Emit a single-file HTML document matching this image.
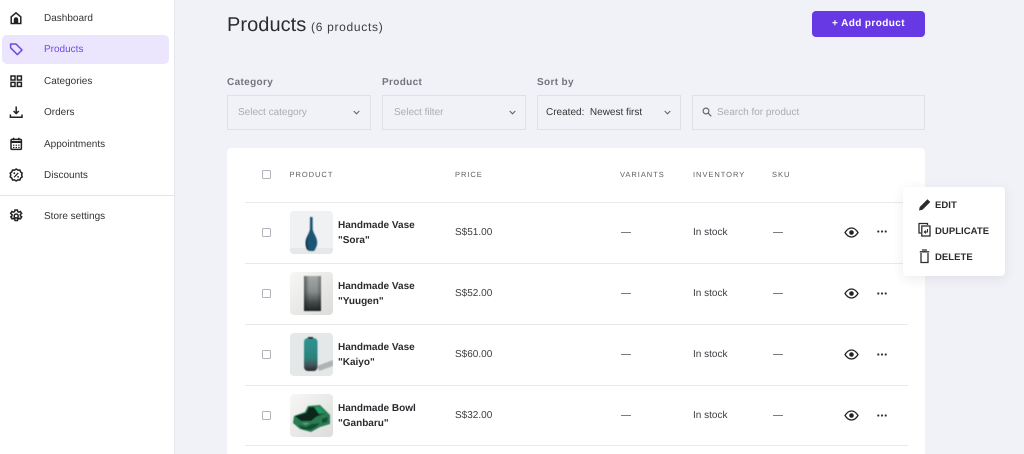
<!DOCTYPE html>
<html><head><meta charset="utf-8"><style>
*{box-sizing:border-box}
html,body{margin:0;padding:0;width:1024px;height:454px;overflow:hidden;background:#f1f2f7;font-family:"Liberation Sans",Arial,sans-serif;text-rendering:geometricPrecision}
#root{position:relative;width:1024px;height:454px;overflow:hidden;background:#f1f2f7}
.a{position:absolute;white-space:nowrap}
#side{position:absolute;left:0;top:0;width:175px;height:454px;background:#fff;border-right:1px solid #e6e7ec}
.nav{position:absolute;left:44px;font-size:10px;line-height:14px;color:#333}
.ni{position:absolute;left:8px;width:16px;height:16px;fill:none;stroke:#222;stroke-width:1.5}
.lab{position:absolute;top:76px;font-size:10px;line-height:13px;font-weight:bold;color:#74747c;letter-spacing:.35px}
.box{position:absolute;top:95px;height:35px;background:#f1f2f7;border:1px solid #e0e1e7;font-size:10px;line-height:33px;color:#ababb1;white-space:nowrap}
.chev{position:absolute;top:110px;width:7px;height:5px;fill:none;stroke:#66666c;stroke-width:1.1}
.th{position:absolute;top:169px;font-size:7.5px;line-height:11px;color:#5c5c64;letter-spacing:.97px}
.line{position:absolute;left:245px;width:663px;height:1px;background:#e9e9ec}
.cb{position:absolute;left:262px;width:9px;height:9px;border:1px solid #b3b3bb;border-radius:1.5px;background:#fff}
.nm{position:absolute;left:338px;font-size:10px;line-height:15px;font-weight:bold;color:#2b2b2f;white-space:nowrap}
.t{position:absolute;font-size:10px;line-height:14px;color:#3c3c42;white-space:nowrap}
.img{position:absolute;left:290px;width:43px;height:43px;border-radius:4px;overflow:hidden}
.eye{position:absolute;left:844px;width:15px;height:11px}
.dots{position:absolute;left:876.5px;width:10px;height:3px}
.mi{position:absolute;left:935px;font-size:9.5px;line-height:13px;font-weight:bold;color:#2c2c30;letter-spacing:.05px}
.ic{position:absolute;left:918px;width:13px;height:15px;fill:none;stroke:#2c2c30;stroke-width:1.3}
</style></head><body><div id="root">
<div id="side"></div>
<div class="a" style="left:0;top:195px;width:174px;height:1px;background:#e4e4e8"></div>
<div class="a" style="left:2px;top:35px;width:167px;height:29px;background:#ebe6fd;border-radius:5px"></div>
<svg class="ni" style="top:10px" viewBox="0 0 16 16"><path d="M3.200 13.500V6.800L8 2.800l4.800 4v6.700z"/><path d="M5.800 14V9.400a2.200 2.200 0 0 1 4.400 0V14z" fill="#222" stroke="none"/></svg>
<svg class="ni" style="top:41px;stroke:#6c45e5" viewBox="0 0 16 16"><path d="M2.600 3h5.400l6 6-4.600 4.600-6.800-6.800z" stroke-linejoin="round"/></svg>
<svg class="ni" style="top:73px" viewBox="0 0 16 16"><rect x="3" y="3" width="4" height="4"/><rect x="9.400" y="3" width="4" height="4"/><rect x="3" y="9.400" width="4" height="4"/><rect x="9.400" y="9.400" width="4" height="4"/></svg>
<svg class="ni" style="top:104px" viewBox="0 0 16 16"><path d="M8.200 2.500v6.700M5.600 7l2.600 2.600L10.800 7"/><path d="M2.400 10.500v2.700h11.600v-2.700"/></svg>
<svg class="ni" style="top:136px" viewBox="0 0 16 16"><rect x="3" y="3.400" width="10.400" height="10" rx="1"/><path d="M3 6h10.400" stroke-width="2"/><path d="M5.600 1.800v2.400M10.800 1.800v2.400"/><path d="M5 9.200h1.400M7.600 9.200H9M10.200 9.200h1.400M5 11.400h1.400M7.600 11.400H9M10.200 11.400h1.400" stroke-width="1.100"/></svg>
<svg class="ni" style="top:167px" viewBox="0 0 16 16"><path d="M8.200 2l1.700 1.100 2-.1.700 1.900 1.600 1.200-.6 1.900.6 1.900-1.600 1.200-.7 1.900-2-.1-1.700 1.100-1.700-1.100-2 .1-.7-1.900L2.200 9.900l.6-1.900-.6-1.900L3.800 4.900l.7-1.900 2 .1z"/><path d="M10.300 5.900l-4.200 4.300" stroke-width="1.200"/><circle cx="6.300" cy="6.200" r=".9" fill="#222" stroke="none"/><circle cx="10.100" cy="9.900" r=".9" fill="#222" stroke="none"/></svg>
<svg class="ni" style="top:208px" viewBox="0 0 16 16"><path d="M7 2h2.400l.3 1.600 1.200.6 1.500-.7 1.200 2-1.300 1 .1 1.300 1.300 1-1.200 2-1.500-.6-1.200.6-.3 1.700H7l-.3-1.700-1.200-.6-1.500.6-1.200-2 1.300-1-.1-1.300-1.300-1 1.200-2 1.500.7 1.200-.6z"/><circle cx="8.200" cy="8" r="2"/></svg>
<div class="nav" style="top:12px">Dashboard</div>
<div class="nav" style="top:43px;color:#7049e8">Products</div>
<div class="nav" style="top:75px">Categories</div>
<div class="nav" style="top:106px">Orders</div>
<div class="nav" style="top:138px">Appointments</div>
<div class="nav" style="top:169px">Discounts</div>
<div class="nav" style="top:210px">Store settings</div>

<div class="a" style="left:227px;top:13px;font-size:20px;line-height:25px;color:#2b2b30;letter-spacing:.05px">Products</div>
<div class="a" style="left:311px;top:20px;font-size:12px;line-height:15px;color:#3c3c42;letter-spacing:.7px">(6 products)</div>
<div class="a" style="left:812px;top:11px;width:113px;height:26px;background:#6639e4;border-radius:4px;color:#fff;font-size:10px;font-weight:bold;line-height:26px;text-align:center;letter-spacing:.4px">+ Add product</div>

<div class="lab" style="left:227px">Category</div>
<div class="lab" style="left:382px">Product</div>
<div class="lab" style="left:537px">Sort by</div>
<div class="box" style="left:227px;width:144px;padding-left:10px">Select category</div>
<div class="box" style="left:382px;width:144px;padding-left:11px">Select filter</div>
<div class="box" style="left:537px;width:144px;padding-left:8px;color:#333">Created:&nbsp; Newest first</div>
<div class="box" style="left:692px;width:233px;padding-left:24px">Search for product</div>
<svg class="chev" style="left:352.500px" viewBox="0 0 7 5"><path d="M.7 1l2.800 2.800L6.300 1"/></svg>
<svg class="chev" style="left:508.500px" viewBox="0 0 7 5"><path d="M.7 1l2.800 2.800L6.300 1"/></svg>
<svg class="chev" style="left:663.500px" viewBox="0 0 7 5"><path d="M.7 1l2.800 2.800L6.300 1"/></svg>
<svg class="a" style="left:702px;top:107px;width:10px;height:10px;fill:none;stroke:#66666c;stroke-width:1.200" viewBox="0 0 10 10"><circle cx="4" cy="4" r="2.900"/><path d="M6.200 6.200L9.300 9.300"/></svg>

<div class="a" style="left:227px;top:148px;width:698px;height:306px;background:#fff;border-radius:4px 4px 0 0"></div>
<div class="cb" style="top:170px"></div>
<div class="th" style="left:289.500px">PRODUCT</div>
<div class="th" style="left:455px">PRICE</div>
<div class="th" style="left:620px">VARIANTS</div>
<div class="th" style="left:693px">INVENTORY</div>
<div class="th" style="left:772px">SKU</div>
<div class="line" style="top:202px"></div>
<div class="line" style="top:263px"></div>
<div class="line" style="top:324px"></div>
<div class="line" style="top:385px"></div>
<div class="line" style="top:445px"></div>

<div class="cb" style="top:228px"></div><div class="cb" style="top:289px"></div><div class="cb" style="top:350px"></div><div class="cb" style="top:411px"></div>

<svg width="0" height="0" style="position:absolute"><defs><filter id="b" x="-20%" y="-20%" width="140%" height="140%"><feGaussianBlur stdDeviation=".45"/></filter><linearGradient id="g1" x1="0" y1="0" x2="0" y2="1"><stop offset="0" stop-color="#a4a9a8"/><stop offset=".45" stop-color="#858c8b"/><stop offset=".75" stop-color="#454c4c"/><stop offset="1" stop-color="#1d2323"/></linearGradient><linearGradient id="g1e" x1="0" y1="0" x2="1" y2="0"><stop offset="0" stop-color="#1a2020" stop-opacity=".55"/><stop offset=".3" stop-color="#1a2020" stop-opacity="0"/><stop offset=".75" stop-color="#1a2020" stop-opacity="0"/><stop offset="1" stop-color="#1a2020" stop-opacity=".35"/></linearGradient><linearGradient id="g2" x1="0" y1="0" x2="0" y2="1"><stop offset="0" stop-color="#2f9490"/><stop offset=".6" stop-color="#2c827c"/><stop offset=".82" stop-color="#44555a"/><stop offset="1" stop-color="#27272d"/></linearGradient><linearGradient id="g3" x1="0" y1="0" x2="1" y2="1"><stop offset="0" stop-color="#f7f7f6"/><stop offset="1" stop-color="#dcdcda"/></linearGradient></defs></svg>

<svg class="img" style="top:211px" viewBox="0 0 43 43"><rect width="43" height="43" fill="#eff1f3"/><rect y="37" width="43" height="6" fill="#e6e8e8"/><g filter="url(#b)"><path d="M20 6h2.600l.1 12c.4 4.500 4.500 8 4.500 13.500 0 3.500-1.700 6-3 8.500h-5.400c-1.500-2.500-3.300-5-3.300-8.500 0-5.500 4-9 4.400-13.500z" fill="#1b5573"/><path d="M19 24c-2 3-2.300 10-.2 15h-1.500c-2.500-4-2.300-10 1.700-15z" fill="#0d3045"/></g></svg>
<svg class="img" style="top:272px" viewBox="0 0 43 43"><rect width="43" height="43" fill="url(#g3)"/><g filter="url(#b)"><rect x="14" y="4" width="17" height="35" fill="url(#g1)"/><rect x="14" y="4" width="17" height="35" fill="url(#g1e)"/></g></svg>
<svg class="img" style="top:333px" viewBox="0 0 43 43"><rect width="43" height="43" fill="#e5e8e8"/><g filter="url(#b)"><path d="M27 33l16-6v6l-14 5z" fill="#b0b2b3"/><rect x="14" y="5" width="13.500" height="33" rx="4" fill="url(#g2)"/><rect x="18" y="4" width="5" height="2" fill="#25322f"/></g></svg>
<svg class="img" style="top:394px" viewBox="0 0 43 43"><rect width="43" height="43" fill="url(#g3)"/><g filter="url(#b)"><path d="M4 22l11-4 3-6 12-1 10 10v9l-10 3-9 5-11-3-7-6z" fill="#2a7c52"/><path d="M5 22l11-3 3-6 10 0 6 6-9 4-5 4H11z" fill="#10261f"/><path d="M24 13l6 0 5 6-6 1z" fill="#1f9a60"/><path d="M8 31l8 2 6-3 8-1-4 4-6 3-8-1zM32 25l6-2-1 5-5 1z" fill="#174d35"/><path d="M12 29l7 0-3 2z" fill="#5aa781"/></g></svg>

<div class="nm" style="top:218px">Handmade Vase<br>"Sora"</div>
<div class="nm" style="top:279px">Handmade Vase<br>"Yuugen"</div>
<div class="nm" style="top:340px">Handmade Vase<br>"Kaiyo"</div>
<div class="nm" style="top:401px">Handmade Bowl<br>"Ganbaru"</div>

<div class="t" style="left:455px;top:226px">S$51.00</div><div class="t" style="left:621px;top:226px">—</div><div class="t" style="left:693px;top:226px">In stock</div><div class="t" style="left:773px;top:226px">—</div>
<div class="t" style="left:455px;top:287px">S$52.00</div><div class="t" style="left:621px;top:287px">—</div><div class="t" style="left:693px;top:287px">In stock</div><div class="t" style="left:773px;top:287px">—</div>
<div class="t" style="left:455px;top:348px">S$60.00</div><div class="t" style="left:621px;top:348px">—</div><div class="t" style="left:693px;top:348px">In stock</div><div class="t" style="left:773px;top:348px">—</div>
<div class="t" style="left:455px;top:409px">S$32.00</div><div class="t" style="left:621px;top:409px">—</div><div class="t" style="left:693px;top:409px">In stock</div><div class="t" style="left:773px;top:409px">—</div>

<svg class="eye" style="top:227px" viewBox="0 0 15 11"><path d="M1 5.500C3 2.300 5 1 7.500 1S12 2.300 14 5.500C12 8.700 10 10 7.500 10S3 8.700 1 5.500z" fill="none" stroke="#222" stroke-width="1.300"/><circle cx="7.500" cy="5.500" r="2.300" fill="#222"/></svg>
<svg class="eye" style="top:288px" viewBox="0 0 15 11"><path d="M1 5.500C3 2.300 5 1 7.500 1S12 2.300 14 5.500C12 8.700 10 10 7.500 10S3 8.700 1 5.500z" fill="none" stroke="#222" stroke-width="1.300"/><circle cx="7.500" cy="5.500" r="2.300" fill="#222"/></svg>
<svg class="eye" style="top:349px" viewBox="0 0 15 11"><path d="M1 5.500C3 2.300 5 1 7.500 1S12 2.300 14 5.500C12 8.700 10 10 7.500 10S3 8.700 1 5.500z" fill="none" stroke="#222" stroke-width="1.300"/><circle cx="7.500" cy="5.500" r="2.300" fill="#222"/></svg>
<svg class="eye" style="top:410px" viewBox="0 0 15 11"><path d="M1 5.500C3 2.300 5 1 7.500 1S12 2.300 14 5.500C12 8.700 10 10 7.500 10S3 8.700 1 5.500z" fill="none" stroke="#222" stroke-width="1.300"/><circle cx="7.500" cy="5.500" r="2.300" fill="#222"/></svg>
<svg class="dots" style="top:230px" viewBox="0 0 10 3" fill="#333"><circle cx="1.300" cy="1.500" r="1.100"/><circle cx="5" cy="1.500" r="1.100"/><circle cx="8.700" cy="1.500" r="1.100"/></svg>
<svg class="dots" style="top:292px" viewBox="0 0 10 3" fill="#333"><circle cx="1.300" cy="1.500" r="1.100"/><circle cx="5" cy="1.500" r="1.100"/><circle cx="8.700" cy="1.500" r="1.100"/></svg>
<svg class="dots" style="top:353px" viewBox="0 0 10 3" fill="#333"><circle cx="1.300" cy="1.500" r="1.100"/><circle cx="5" cy="1.500" r="1.100"/><circle cx="8.700" cy="1.500" r="1.100"/></svg>
<svg class="dots" style="top:414px" viewBox="0 0 10 3" fill="#333"><circle cx="1.300" cy="1.500" r="1.100"/><circle cx="5" cy="1.500" r="1.100"/><circle cx="8.700" cy="1.500" r="1.100"/></svg>

<div class="a" style="left:903px;top:187px;width:102px;height:89px;background:#fff;border-radius:4px;box-shadow:0 3px 12px rgba(40,40,70,.09)"></div>
<svg class="ic" style="top:197px" viewBox="0 0 13 15"><path d="M1.500 13l.6-2.800 7.400-7.400 2.200 2.200-7.400 7.400z" fill="#2c2c30" stroke-width=".8"/></svg>
<svg class="ic" style="top:222px" viewBox="0 0 13 15"><path d="M3 11H1V1.500h8.500V3"/><rect x="3.800" y="4" width="8.200" height="10"/><path d="M9.500 7v3H6.500M8 8.500L6.300 10l1.700 1.500" stroke-width="1"/></svg>
<svg class="ic" style="top:249px" viewBox="0 0 13 15"><path d="M3 4v9.500h7V4M1.800 2.800h9.400M4 1h5"/></svg>
<div class="mi" style="top:199px">EDIT</div>
<div class="mi" style="top:225px">DUPLICATE</div>
<div class="mi" style="top:251px">DELETE</div>
</div></body></html>
